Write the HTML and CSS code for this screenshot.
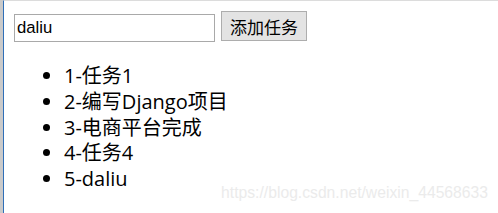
FILE: index.html
```html
<!DOCTYPE html>
<html>
<head>
<meta charset="utf-8">
<link rel="stylesheet" href="styles.css">
</head>
<body>
<div class="frame">
  <div class="page">
    <div class="form">
      <input class="task-input" type="text" value="daliu">
      <button class="add-btn">添加任务</button>
    </div>
    <ul class="tasks">
      <li>1-任务1</li>
      <li>2-编写Django项目</li>
      <li>3-电商平台完成</li>
      <li>4-任务4</li>
      <li>5-daliu</li>
    </ul>
  </div>
  <div class="watermark">https://blog.csdn.net/weixin_44568633</div>
</div>
</body>
</html>
```

FILE: styles.css
```css
html, body {
  margin: 0;
  padding: 0;
  background: #ffffff;
}
.frame {
  position: relative;
  width: 498px;
  height: 213px;
  box-sizing: border-box;
  border-left: 3px solid #cacaca;
  overflow: hidden;
}
.page {
  height: 100%;
  box-sizing: border-box;
  border-left: 1px solid #2f6fb8;
  border-top: 1px solid #dcdcdc;
  padding: 10px 0 0 10px;
}
.form {
  display: flex;
  align-items: flex-start;
  gap: 6px;
}
.task-input {
  margin: 3px 0 0 0;
  width: 201px;
  height: 28px;
  box-sizing: border-box;
  border: 1px solid #a9a9a9;
  padding: 0 2px;
  font-family: "Liberation Sans", Arial, sans-serif;
  font-size: 16.7px;
  color: #000;
  outline: none;
}
.add-btn {
  margin: 0;
  width: 86px;
  height: 30px;
  box-sizing: border-box;
  border: 1px solid #adadad;
  background: #e3e3e3;
  padding: 0;
  font-family: "Noto Sans CJK SC", sans-serif;
  font-size: 17px;
  color: #000;
}
.tasks {
  margin: 21px 0 0 0;
  padding-left: 50px;
  font-family: "Open Sans", "Noto Sans CJK SC", sans-serif;
  font-size: 20px;
  line-height: 25.8px;
  color: #000;
}
.watermark {
  position: absolute;
  right: 10px;
  top: 184px;
  font-family: "Liberation Sans", Arial, sans-serif;
  font-size: 15.7px;
  color: #ebebeb;
  white-space: nowrap;
}
```
